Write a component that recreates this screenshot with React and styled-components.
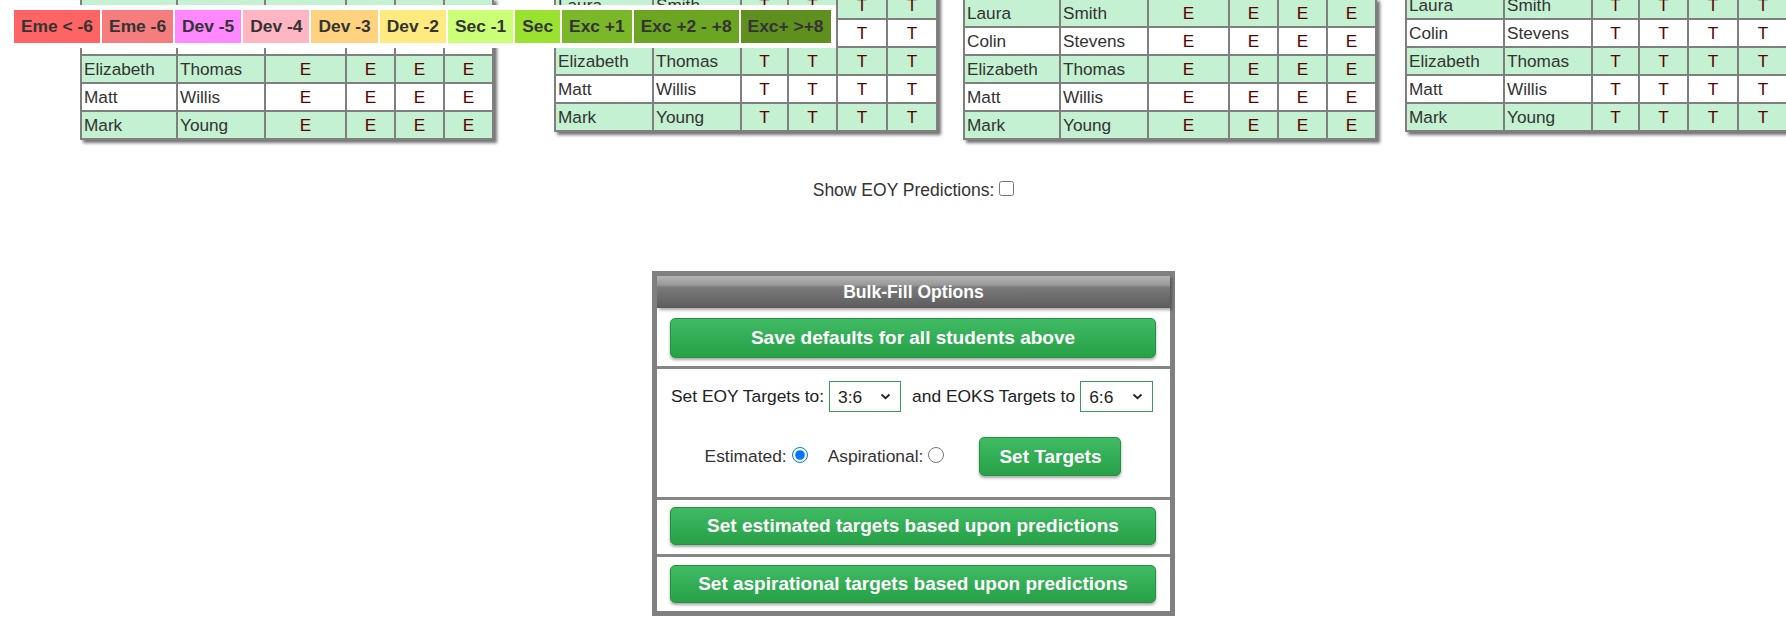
import React from 'react';
import styled, { createGlobalStyle } from 'styled-components';

const GlobalStyle = createGlobalStyle`
  html, body {
    margin: 0;
    padding: 0;
    background: #fff;
  }
  body {
    font-family: "Liberation Sans", Arial, sans-serif;
    color: #333;
  }
`;

const Page = styled.div`
  position: relative;
  width: 1786px;
  height: 624px;
  overflow: hidden;
`;

// legend floats over the top of the tables
const Legend = styled.div`
  position: absolute;
  top: 5px;
  left: 10px;
  display: flex;
  gap: 2px;
  padding: 5px 5px 5px 4px;
  background: #fff;
`;

const Key = styled.div`
  height: 33px;
  line-height: 33px;
  padding: 0 7px;
  background: ${({ $bg }) => $bg};
  font-weight: bold;
  font-size: 17.4px;
  color: #333;
  white-space: nowrap;
`;

const TablesRow = styled.div`
  display: flex;
  align-items: flex-start;
  margin-top: -10px;
  padding-left: 80px;
`;

const Grid = styled.table`
  flex-shrink: 0;
  border-collapse: collapse;
  table-layout: fixed;
  width: ${({ $width }) => $width}px;
  margin-top: ${({ $offset }) => $offset}px;
  margin-left: ${({ $gap }) => $gap}px;
  box-shadow: 3px 3px 3px rgba(0, 0, 0, 0.55);
  font-size: 17.2px;
`;

const Row = styled.tr`
  background: ${({ $shade }) => ($shade ? '#c4f1d1' : '#fff')};
`;

const Cell = styled.td`
  border: 2px solid #7f7f7f;
  padding: 3px 2px;
  height: 20px;
  line-height: 20px;
  white-space: nowrap;
  overflow: hidden;
  text-align: ${({ $mark }) => ($mark ? 'center' : 'left')};
  color: ${({ $mark }) => ($mark ? '#5c0000' : '#333')};
`;

const Main = styled.div`
  display: flex;
  flex-direction: column;
  align-items: center;
  padding-left: 41px;
`;

const ShowLine = styled.label`
  display: flex;
  align-items: center;
  gap: 5px;
  margin-top: 40px;
  font-size: 17.5px;
  line-height: 20px;
  color: #333;

  input {
    width: 15px;
    height: 15px;
    margin: 0 0 4px;
  }
`;

const Panel = styled.div`
  margin-top: 71px;
  width: 513px;
  border: 5px solid #808080;
  background: #fff;
`;

const PanelHeader = styled.div`
  height: 32px;
  line-height: 32px;
  background: linear-gradient(#b4b4b4 0%, #999 28%, #7a7a7a 36%, #5c5c5c 100%);
  box-shadow: 2px 2px 3px rgba(0, 0, 0, 0.35);
  color: #fff;
  font-weight: bold;
  font-size: 17.6px;
  text-align: center;
`;

const Section = styled.div`
  padding: ${({ $pad }) => $pad};
  border-top: ${({ $first }) => ($first ? 'none' : '3px solid #868686')};
`;

const GreenButton = styled.button`
  display: block;
  width: ${({ $wide }) => ($wide ? '486px' : 'auto')};
  height: ${({ $h }) => $h}px;
  padding: 0 19px;
  border: 1px solid #24933f;
  border-radius: 5px;
  background: linear-gradient(#40bb64, #27a047);
  box-shadow: 0 2px 3px rgba(0, 0, 0, 0.35);
  color: #fff;
  font-family: "Liberation Sans", Arial, sans-serif;
  font-weight: bold;
  font-size: 19px;
  white-space: nowrap;
  cursor: pointer;
  flex-shrink: 0;
`;

const TargetsRow = styled.div`
  display: flex;
  align-items: center;
  width: 486px;
  padding-left: 1px;
  font-size: 17.4px;
  color: #222;
  white-space: nowrap;
`;

const Spacer = styled.span`
  display: inline-block;
  width: ${({ $w }) => $w}px;
  flex-shrink: 0;
`;

const SelectBox = styled.div`
  position: relative;
  width: ${({ $w }) => $w}px;
  height: 31px;
  flex-shrink: 0;

  svg {
    position: absolute;
    right: 10px;
    top: 12px;
    pointer-events: none;
  }
`;

const Select = styled.select`
  appearance: none;
  width: 100%;
  height: 100%;
  padding: 0 0 0 8px;
  border: 1px solid #3b9b5c;
  border-radius: 0;
  background: #fff;
  color: #222;
  font-family: "Liberation Sans", Arial, sans-serif;
  font-size: 17.4px;
`;

const ChoiceRow = styled.div`
  display: flex;
  align-items: center;
  justify-content: center;
  width: 486px;
  margin-top: 25px;
  font-size: 17.4px;
  color: #333;
  white-space: nowrap;

  input {
    width: 16px;
    height: 16px;
    margin: 0 0 4px;
    flex-shrink: 0;
  }
`;

const legend = [
  ['Eme < -6', '#ff6464'],
  ['Eme -6', '#f57d7d'],
  ['Dev -5', '#ff88ff'],
  ['Dev -4', '#ffb5c2'],
  ['Dev -3', '#ffd27f'],
  ['Dev -2', '#ffea80'],
  ['Sec -1', '#ccff78'],
  ['Sec', '#9ae22f'],
  ['Exc +1', '#7ab829'],
  ['Exc +2 - +8', '#6ca522'],
  ['Exc+ >+8', '#5f8f1e'],
];

const students = [
  ['Laura', 'Smith'],
  ['Colin', 'Stevens'],
  ['Elizabeth', 'Thomas'],
  ['Matt', 'Willis'],
  ['Mark', 'Young'],
];

const tables = [
  { mark: 'E', cols: [96, 88, 81, 49, 49, 49], offset: 8, gap: 0 },
  { mark: 'T', cols: [98, 88, 47, 49, 50, 50], offset: 0, gap: 60 },
  { mark: 'E', cols: [96, 88, 81, 49, 49, 49], offset: 8, gap: 25 },
  { mark: 'T', cols: [98, 88, 47, 49, 50, 50], offset: 0, gap: 28 },
];

const Chevron = () => (
  <svg width="11" height="7" viewBox="0 0 11 7">
    <path d="M1.5 1.5 L5.5 5.2 L9.5 1.5" fill="none" stroke="#222" strokeWidth="1.8" />
  </svg>
);

const TargetSelect = ({ value, width }) => (
  <SelectBox $w={width}>
    <Select defaultValue={value}>
      {['3:6', '4:6', '5:6', '6:6'].map((v) => (
        <option key={v}>{v}</option>
      ))}
    </Select>
    <Chevron />
  </SelectBox>
);

const App = () => {
  return (
    <Page>
      <GlobalStyle />
      <TablesRow>
        {tables.map((t, ti) => (
          <Grid
            key={ti}
            $width={t.cols.reduce((a, b) => a + b, 0)}
            $offset={t.offset}
            $gap={t.gap}
          >
            <colgroup>
              {t.cols.map((w, ci) => (
                <col key={ci} style={{ width: w }} />
              ))}
            </colgroup>
            <tbody>
              {students.map(([first, last], ri) => (
                <Row key={ri} $shade={ri % 2 === 0}>
                  <Cell>{first}</Cell>
                  <Cell>{last}</Cell>
                  {[0, 1, 2, 3].map((k) => (
                    <Cell key={k} $mark>
                      {t.mark}
                    </Cell>
                  ))}
                </Row>
              ))}
            </tbody>
          </Grid>
        ))}
      </TablesRow>

      <Legend>
        {legend.map(([label, bg]) => (
          <Key key={label} $bg={bg}>
            {label}
          </Key>
        ))}
      </Legend>

      <Main>
        <ShowLine>
          Show EOY Predictions: <input type="checkbox" />
        </ShowLine>

        <Panel>
          <PanelHeader>Bulk-Fill Options</PanelHeader>
          <Section $first $pad="10px 14px 8px 13px">
            <GreenButton $wide $h={40}>Save defaults for all students above</GreenButton>
          </Section>
          <Section $pad="12px 14px 21px 13px">
            <TargetsRow>
              <span>Set EOY Targets to:</span>
              <Spacer $w={5} />
              <TargetSelect value="3:6" width={72} />
              <Spacer $w={11} />
              <span>and EOKS Targets to</span>
              <Spacer $w={5} />
              <TargetSelect value="6:6" width={73} />
            </TargetsRow>
            <ChoiceRow>
              <span>Estimated:</span>
              <Spacer $w={5} />
              <input type="radio" name="kind" defaultChecked />
              <Spacer $w={20} />
              <span>Aspirational:</span>
              <Spacer $w={5} />
              <input type="radio" name="kind" />
              <Spacer $w={35} />
              <GreenButton $h={39}>Set Targets</GreenButton>
            </ChoiceRow>
          </Section>
          <Section $pad="7px 14px 9px 13px">
            <GreenButton $wide $h={38}>Set estimated targets based upon predictions</GreenButton>
          </Section>
          <Section $pad="8px 14px 8px 13px">
            <GreenButton $wide $h={38}>Set aspirational targets based upon predictions</GreenButton>
          </Section>
        </Panel>
      </Main>
    </Page>
  );
};

export default App;
